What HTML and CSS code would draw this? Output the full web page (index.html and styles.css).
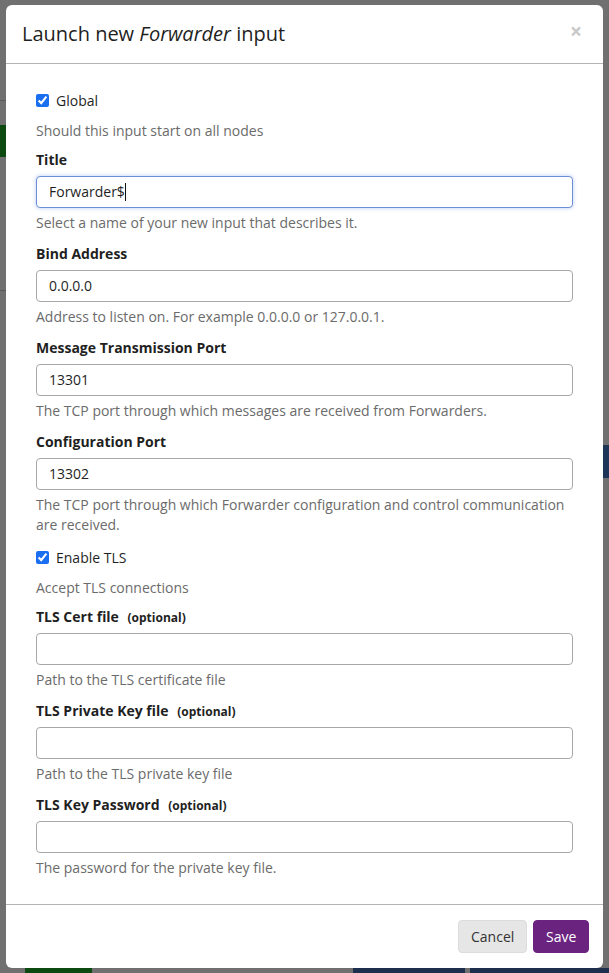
FILE: index.html
```html
<!DOCTYPE html>
<html lang="en">
<head>
<meta charset="utf-8">
<title>Launch new Forwarder input</title>
<link rel="stylesheet" href="styles.css">
</head>
<body>
<div class="backdrop">
  <div class="bg-green"></div>
  <div class="bg-line bg-line-1"></div>
  <div class="bg-line bg-line-2"></div>
  <div class="bg-navy-right"></div>
  <div class="bg-bottom">
    <span class="bg-running"></span>
    <span class="bg-navy-a"></span>
    <span class="bg-navy-b"></span>
  </div>
</div>
<div class="modal">
  <div class="modal-header">
    <h4 class="modal-title">Launch new <em>Forwarder</em> input</h4>
    <span class="close">×</span>
  </div>
  <div class="modal-body">
    <div class="form-group check-group">
      <label class="checkbox"><input type="checkbox" checked> Global</label>
      <div class="help">Should this input start on all nodes</div>
    </div>
    <div class="form-group">
      <div class="label">Title</div>
      <div class="form-control focused">Forwarder$<span class="caret"></span></div>
      <div class="help help-tight">Select a name of your new input that describes it.</div>
    </div>
    <div class="form-group">
      <div class="label">Bind Address</div>
      <input class="form-control" type="text" value="0.0.0.0">
      <div class="help help-tight">Address to listen on. For example 0.0.0.0 or 127.0.0.1.</div>
    </div>
    <div class="form-group">
      <div class="label">Message Transmission Port</div>
      <input class="form-control" type="text" value="13301">
      <div class="help help-tight">The TCP port through which messages are received from Forwarders.</div>
    </div>
    <div class="form-group">
      <div class="label">Configuration Port</div>
      <input class="form-control" type="text" value="13302">
      <div class="help help-tight">The TCP port through which Forwarder configuration and control communication are received.</div>
    </div>
    <div class="form-group check-group">
      <label class="checkbox"><input type="checkbox" checked> Enable TLS</label>
      <div class="help">Accept TLS connections</div>
    </div>
    <div class="form-group">
      <div class="label">TLS Cert file <span class="optional">(optional)</span></div>
      <input class="form-control" type="text" value="">
      <div class="help help-tight">Path to the TLS certificate file</div>
    </div>
    <div class="form-group">
      <div class="label">TLS Private Key file <span class="optional">(optional)</span></div>
      <input class="form-control" type="text" value="">
      <div class="help help-tight">Path to the TLS private key file</div>
    </div>
    <div class="form-group">
      <div class="label">TLS Key Password <span class="optional">(optional)</span></div>
      <input class="form-control" type="password" value="">
      <div class="help help-tight">The password for the private key file.</div>
    </div>
  </div>
  <div class="modal-footer">
    <button class="btn btn-default" type="button">Cancel</button>
    <button class="btn btn-primary" type="button">Save</button>
  </div>
</div>
</body>
</html>
```
FILE: styles.css
```css
* { box-sizing: border-box; }
html, body {
  margin: 0;
  padding: 0;
  height: 973px;
  overflow: hidden;
}
body {
  background: #707070;
  font-family: "Open Sans", "Noto Sans", sans-serif;
  font-size: 14px;
  line-height: 20px;
  color: #1f1f1f;
  padding: 5px 6px 0 6px;
  position: relative;
}
.backdrop {
  position: absolute;
  inset: 0;
  z-index: 0;
}
.bg-green {
  position: absolute;
  left: 0; top: 125px;
  width: 6px; height: 32px;
  background: #0d4a12;
}
.bg-line {
  position: absolute;
  left: 0; width: 6px; height: 1px;
  background: #5a5a5a;
}
.bg-line-1 { top: 100px; }
.bg-line-2 { top: 290px; }
.bg-navy-right {
  position: absolute;
  right: 0; top: 445px;
  width: 6px; height: 33px;
  background: #1d3556;
}
.bg-bottom {
  position: absolute;
  left: 0; right: 0; top: 968px; height: 5px;
}
.bg-running {
  position: absolute;
  left: 25px; top: 0;
  width: 67px; height: 5px;
  background: #0d4a12;
}
.bg-navy-a {
  position: absolute;
  left: 353px; top: 0; width: 112px; height: 5px;
  background: #1d2f4c;
}
.bg-navy-b {
  position: absolute;
  left: 470px; top: 0; width: 139px; height: 5px;
  background: #1d2f4c;
}
.modal {
  position: relative;
  z-index: 1;
  width: 597px;
  height: 963px;
  background: #fff;
  border-radius: 6px;
  display: flex;
  flex-direction: column;
}
.modal-header {
  height: 60px;
  padding: 0 21px 0 16px;
  border-bottom: 1px solid #b4b4b4;
  display: flex;
  align-items: center;
  justify-content: space-between;
}
.modal-title {
  margin: 0;
  font-size: 20px;
  font-weight: 400;
  line-height: 26px;
  color: #1f1f1f;
}
.modal-title em { font-style: italic; }
.close {
  font-size: 21px;
  font-weight: 700;
  color: #c9c9c9;
  line-height: 20px;
  margin-top: -6px;
}
.modal-body {
  flex: 1;
  padding: 25px 30px 15px 30px;
}
.form-group { margin-bottom: 11px; }
.check-group {
  padding-top: 2px;
  margin-bottom: 9px;
}
.checkbox {
  display: flex;
  align-items: center;
  height: 20px;
  color: #1f1f1f;
}
.checkbox input {
  width: 13px;
  height: 13px;
  margin: 0 7px 0 0;
  accent-color: #1a6ff0;
}
.label {
  font-weight: 700;
  height: 20px;
  margin-bottom: 6px;
  color: #1f1f1f;
}
.optional {
  font-size: 12px;
  margin-left: 5px;
}
.form-control {
  display: block;
  width: 100%;
  height: 32px;
  padding: 0 12px;
  border: 1px solid #a8a8a8;
  border-radius: 4px;
  font-family: inherit;
  font-size: 14px;
  color: #1f1f1f;
  background: #fff;
  line-height: 30px;
  outline: none;
}
.form-control.focused {
  border-color: #6d8fd3;
  box-shadow: 0 0 4px rgba(102, 140, 233, 0.45);
}
.caret {
  display: inline-block;
  width: 1px;
  height: 18px;
  background: #111;
  vertical-align: -4px;
}
.help {
  margin-top: 10px;
  color: #6b6b6b;
}
.help-tight { margin-top: 5px; }
.modal-footer {
  height: 65px;
  border-top: 1px solid #b4b4b4;
  padding: 15px 14px 0 0;
  display: flex;
  justify-content: flex-end;
  align-items: flex-start;
  gap: 6px;
}
.btn {
  height: 33px;
  padding: 0 12px;
  border-radius: 4px;
  font-family: inherit;
  font-size: 14px;
  line-height: 31px;
  border: 1px solid transparent;
}
.btn-default {
  background: #e6e6e6;
  border-color: #dcdcdc;
  color: #333;
  width: 69px;
}
.btn-primary {
  background: #6a2480;
  border-color: #6a2480;
  color: #fff;
  width: 56px;
}
```
